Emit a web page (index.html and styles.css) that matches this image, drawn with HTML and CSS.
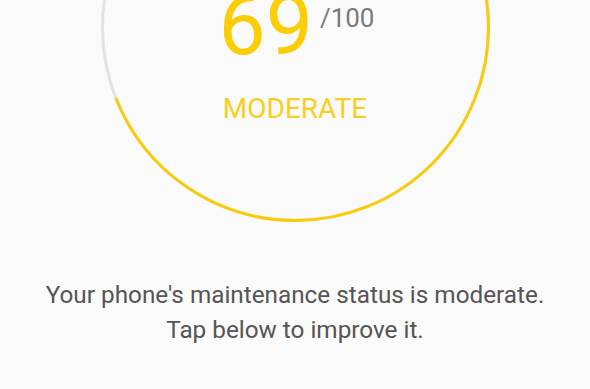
FILE: index.html
```html
<!DOCTYPE html>
<html lang="en">
<head>
<meta charset="utf-8">
<title>Device maintenance</title>
<link rel="stylesheet" href="styles.css">
</head>
<body>
<main class="screen">
  <section class="gauge">
    <svg class="gauge-ring" viewBox="0 0 389 389" width="389" height="389" aria-hidden="true">
      <circle class="ring-track" cx="194.5" cy="194.5" r="193"></circle>
      <circle class="ring-value" cx="194.5" cy="194.5" r="193" stroke-dasharray="836.7 1300" transform="rotate(-90 194.5 194.5)"></circle>
    </svg>
    <div class="gauge-content">
      <div class="score-row">
        <span class="score">69</span>
        <span class="score-max">/100</span>
      </div>
      <div class="status">MODERATE</div>
    </div>
  </section>
  <p class="message">Your phone's maintenance status is moderate.<br>Tap below to improve it.</p>
</main>
</body>
</html>
```

FILE: styles.css
```css
html, body {
  margin: 0;
  padding: 0;
  background: #fafafa;
}

body {
  width: 590px;
  height: 389px;
  overflow: hidden;
  font-family: Roboto, "Liberation Sans", sans-serif;
}

.screen {
  display: flex;
  flex-direction: column;
  align-items: center;
}

.gauge {
  display: grid;
  width: 389px;
  height: 389px;
  margin-top: -167px;
}

.gauge-ring,
.gauge-content {
  grid-area: 1 / 1;
}

.ring-track {
  fill: none;
  stroke: #e2e2e2;
  stroke-width: 3;
}

.ring-value {
  fill: none;
  stroke: #f9cc0a;
  stroke-width: 3;
}

.gauge-content {
  display: flex;
  flex-direction: column;
  align-items: center;
  padding-top: 151px;
}

.score-row {
  display: flex;
  align-items: flex-start;
  gap: 7px;
  padding-left: 3px;
}

.score {
  font-size: 84px;
  line-height: 1;
  color: #fbcd05;
}

.score-max {
  font-size: 26px;
  line-height: 1;
  color: #7a7a7a;
  margin-top: 21px;
}

.status {
  margin-top: 27px;
  font-size: 28px;
  line-height: 1;
  color: #f7cf22;
}

.message {
  margin: 55px 0 0;
  font-size: 24.3px;
  line-height: 35px;
  color: #555555;
  text-align: center;
}
```
